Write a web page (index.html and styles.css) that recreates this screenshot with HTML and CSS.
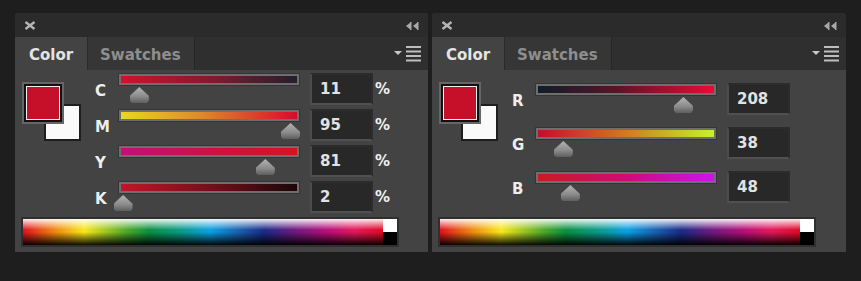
FILE: index.html
```html
<!DOCTYPE html>
<html lang="en">
<head>
  <meta charset="UTF-8">
  <title>Color Panels</title>
  <link rel="stylesheet" href="styles.css">
</head>
<body>
  <div class="dock">

    <!-- CMYK panel -->
    <div class="panel">
      <div class="panel__head">
        <span class="panel__close">
          <svg width="12" height="9" viewBox="0 0 12 9"><path d="M1.5 1 L10.5 8 M10.5 1 L1.5 8" stroke="#b4b4b4" stroke-width="2.4"/></svg>
        </span>
        <span class="panel__collapse">
          <svg width="14" height="10" viewBox="0 0 14 10"><path d="M6 1 L1 5 L6 9 Z M13 1 L8 5 L13 9 Z" fill="#a8a8a8"/><rect x="5" y="1" width="1.5" height="8" fill="#a8a8a8"/><rect x="12" y="1" width="1.5" height="8" fill="#a8a8a8"/></svg>
        </span>
      </div>
      <div class="panel__tabs">
        <div class="tab tab--active">Color</div>
        <div class="tab">Swatches</div>
        <div class="tab__spacer"></div>
        <span class="panel__menu">
          <svg width="27" height="16" viewBox="0 0 27 16"><path d="M0 5 L8 5 L4 9 Z" fill="#c8c8c8"/><rect x="12" y="0" width="15" height="2" fill="#bdbdbd"/><rect x="12" y="4.5" width="15" height="2" fill="#bdbdbd"/><rect x="12" y="9" width="15" height="2" fill="#bdbdbd"/><rect x="12" y="13.5" width="15" height="2" fill="#bdbdbd"/></svg>
        </span>
      </div>
      <div class="panel__body">
        <div class="picker">
          <div class="swatches">
            <div class="swatch swatch--bg"></div>
            <div class="swatch swatch--fg"></div>
          </div>
          <div class="sliders sliders--cmyk">
            <div class="slider-row">
              <span class="slider-row__label">C</span>
              <div class="track"><div class="track__bar bar--c"></div><span class="thumb" style="left: 11%"></span></div>
              <div class="value">11</div>
              <span class="unit">%</span>
            </div>
            <div class="slider-row">
              <span class="slider-row__label">M</span>
              <div class="track"><div class="track__bar bar--m"></div><span class="thumb" style="left: 95%"></span></div>
              <div class="value">95</div>
              <span class="unit">%</span>
            </div>
            <div class="slider-row">
              <span class="slider-row__label">Y</span>
              <div class="track"><div class="track__bar bar--y"></div><span class="thumb" style="left: 81%"></span></div>
              <div class="value">81</div>
              <span class="unit">%</span>
            </div>
            <div class="slider-row">
              <span class="slider-row__label">K</span>
              <div class="track"><div class="track__bar bar--k"></div><span class="thumb" style="left: 2%"></span></div>
              <div class="value">2</div>
              <span class="unit">%</span>
            </div>
          </div>
        </div>
        <div class="spectrum">
          <div class="spectrum__ramp"></div>
          <div class="spectrum__bw"><span class="bw--white"></span><span class="bw--black"></span></div>
        </div>
      </div>
    </div>

    <!-- RGB panel -->
    <div class="panel">
      <div class="panel__head">
        <span class="panel__close">
          <svg width="12" height="9" viewBox="0 0 12 9"><path d="M1.5 1 L10.5 8 M10.5 1 L1.5 8" stroke="#b4b4b4" stroke-width="2.4"/></svg>
        </span>
        <span class="panel__collapse">
          <svg width="14" height="10" viewBox="0 0 14 10"><path d="M6 1 L1 5 L6 9 Z M13 1 L8 5 L13 9 Z" fill="#a8a8a8"/><rect x="5" y="1" width="1.5" height="8" fill="#a8a8a8"/><rect x="12" y="1" width="1.5" height="8" fill="#a8a8a8"/></svg>
        </span>
      </div>
      <div class="panel__tabs">
        <div class="tab tab--active">Color</div>
        <div class="tab">Swatches</div>
        <div class="tab__spacer"></div>
        <span class="panel__menu">
          <svg width="27" height="16" viewBox="0 0 27 16"><path d="M0 5 L8 5 L4 9 Z" fill="#c8c8c8"/><rect x="12" y="0" width="15" height="2" fill="#bdbdbd"/><rect x="12" y="4.5" width="15" height="2" fill="#bdbdbd"/><rect x="12" y="9" width="15" height="2" fill="#bdbdbd"/><rect x="12" y="13.5" width="15" height="2" fill="#bdbdbd"/></svg>
        </span>
      </div>
      <div class="panel__body">
        <div class="picker">
          <div class="swatches">
            <div class="swatch swatch--bg"></div>
            <div class="swatch swatch--fg"></div>
          </div>
          <div class="sliders sliders--rgb">
            <div class="slider-row">
              <span class="slider-row__label">R</span>
              <div class="track"><div class="track__bar bar--r"></div><span class="thumb" style="left: 81.6%"></span></div>
              <div class="value">208</div>
            </div>
            <div class="slider-row">
              <span class="slider-row__label">G</span>
              <div class="track"><div class="track__bar bar--g"></div><span class="thumb" style="left: 14.9%"></span></div>
              <div class="value">38</div>
            </div>
            <div class="slider-row">
              <span class="slider-row__label">B</span>
              <div class="track"><div class="track__bar bar--b"></div><span class="thumb" style="left: 18.8%"></span></div>
              <div class="value">48</div>
            </div>
          </div>
        </div>
        <div class="spectrum">
          <div class="spectrum__ramp"></div>
          <div class="spectrum__bw"><span class="bw--white"></span><span class="bw--black"></span></div>
        </div>
      </div>
    </div>

  </div>
</body>
</html>
```

FILE: styles.css
```css
html {
  box-sizing: border-box;
  background: #1e1e1e;
}

*, *:before, *:after {
  box-sizing: inherit;
}

body {
  margin: 0;
  font-family: 'DejaVu Sans', 'Open Sans', sans-serif;
  color: #e6e6e6;
}

.dock {
  display: flex;
  gap: 4px;
  padding: 13px 0 0 15px;
}

.panel {
  width: 413px;
  height: 239px;
  display: flex;
  flex-direction: column;
  background: #434343;
  border-radius: 4px 4px 0 0;
  overflow: hidden;
}

.panel + .panel {
  width: 414px;
}

/* header strip */
.panel__head {
  height: 24px;
  display: flex;
  align-items: center;
  justify-content: space-between;
  padding: 0 9px 0 9px;
  background: #2b2b2b;
}

.panel__head svg {
  display: block;
}

.panel__collapse {
  margin-top: 1px;
}

/* tabs */
.panel__tabs {
  height: 33px;
  display: flex;
  align-items: stretch;
  background: #2f2f2f;
}

.tab {
  display: flex;
  align-items: center;
  padding: 3px 12px 0 12px;
  font-size: 15px;
  font-weight: 700;
  color: #8e8e8e;
  background: #363636;
  border-right: 1px solid #262626;
  width: 107px;
}

.tab--active {
  width: 73px;
  padding-left: 14px;
  color: #e4e4e4;
  background: #434343;
  border-right: 1px solid #2a2a2a;
}

.tab__spacer {
  flex: 1;
}

.panel__menu {
  display: flex;
  align-items: center;
  padding-right: 7px;
}

.panel__menu svg {
  display: block;
}

/* body */
.panel__body {
  flex: 1;
  display: flex;
  flex-direction: column;
  padding: 0 0 5px 6px;
}

.picker {
  display: flex;
}

.swatches {
  position: relative;
  width: 74px;
  height: 72px;
  margin-top: 12px;
  flex-shrink: 0;
}

.swatch {
  position: absolute;
}

.swatch--fg {
  left: 1px;
  top: 0;
  width: 42px;
  height: 42px;
  background: #c6102a;
  border: 2px solid #666;
  box-shadow: inset 0 0 0 2px #111, inset 0 0 0 3px #f2f2f2;
}

.swatch--bg {
  left: 23px;
  top: 22px;
  width: 37px;
  height: 37px;
  background: #fafafa;
  border: 2px solid #1e1e1e;
}

/* slider rows */
.sliders {
  display: flex;
  flex-direction: column;
}

.sliders--cmyk {
  padding-top: 3px;
}

.sliders--rgb {
  padding-top: 13px;
}

.slider-row {
  display: flex;
  align-items: flex-start;
  height: 36px;
}

.sliders--rgb .slider-row {
  height: 44px;
}

.slider-row__label {
  width: 24px;
  margin-top: 9px;
  font-size: 15px;
  font-weight: 700;
  line-height: 18px;
  color: #eeeeee;
}

.track {
  position: relative;
  width: 180px;
  margin-top: 1px;
}

.track__bar {
  height: 11px;
  border: 2px solid #6e6e6e;
  box-shadow: 0 0 0 1px #353535;
}

.bar--c { background: linear-gradient(to right, #d4102c, #7a1c30 55%, #241e2c); }
.bar--m { background: linear-gradient(to right, #e8d824, #e08a28 45%, #d80a2c); }
.bar--y { background: linear-gradient(to right, #c80c7c, #d01040 55%, #d2161e); }
.bar--k { background: linear-gradient(to right, #c41428, #6e0e18 55%, #1a0608); }
.bar--r { background: linear-gradient(to right, #0e1e28, #5a1428 45%, #ec0a32); }
.bar--g { background: linear-gradient(to right, #c80c2a, #d07a24 50%, #c4f42a); }
.bar--b { background: linear-gradient(to right, #c81c1c, #d00a78 50%, #cc14ec); }

.thumb {
  position: absolute;
  top: 13px;
  width: 19px;
  height: 16px;
  margin-left: -9px;
  background: linear-gradient(to bottom, #b4b4b4, #8a8a8a 60%, #5e5e5e);
  clip-path: polygon(50% 0, 100% 55%, 100% 85%, 90% 100%, 10% 100%, 0 85%, 0 55%);
}

.value {
  width: 63px;
  height: 32px;
  margin-left: 11px;
  padding: 5px 0 0 8px;
  font-size: 15px;
  font-weight: 700;
  color: #e2e2e2;
  background: #282828;
  border: 2px solid #2c2c2c;
  border-left-color: #4c4c4c;
  border-bottom-color: #505050;
}

.unit {
  margin: 7px 0 0 2px;
  font-size: 15px;
  font-weight: 700;
  color: #f0f0f0;
}

/* spectrum */
.spectrum {
  margin-top: auto;
  width: 378px;
  height: 30px;
  display: flex;
  border: 2px solid #2f2f2f;
  background: #2f2f2f;
}

.spectrum__ramp {
  flex: 1;
  background:
    linear-gradient(to bottom, rgba(255,255,255,0.92) 0%, rgba(255,255,255,0) 42%, rgba(0,0,0,0) 50%, rgba(0,0,0,0.95) 100%),
    linear-gradient(to right, #e0101e 0%, #f08a10 9%, #f8e81a 17%, #4aa82a 29%, #0a9040 35%, #0a9a8a 44%, #0aa0e4 52%, #1860b0 60%, #1a2a88 67%, #6a1a80 75%, #b40e7a 84%, #e2185a 92%, #e00a24 100%);
}

.spectrum__bw {
  width: 14px;
  display: flex;
  flex-direction: column;
}

.bw--white {
  flex: 1;
  background: #fff;
}

.bw--black {
  flex: 1;
  background: #000;
}
```
